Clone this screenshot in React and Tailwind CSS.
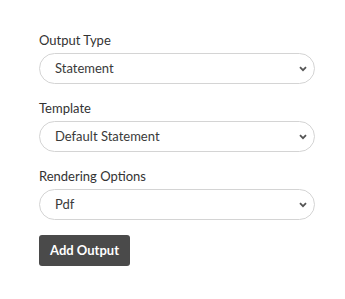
const Field = ({ label, value }) => (
  <div className="flex flex-col">
    <label className="text-[13px] leading-[18px] text-[#333333]">{label}</label>
    <div className="relative mt-[4px]">
      <select
        defaultValue={value}
        className="h-[31px] w-full appearance-none rounded-full border border-[#d4d4d4] bg-white pl-[15px] pr-8 text-[13px] text-[#3a3a3a] outline-none"
        style={{ fontFamily: "Lato, 'Liberation Sans', sans-serif" }}
      >
        <option>{value}</option>
      </select>
      <svg
        className="pointer-events-none absolute right-[8px] top-1/2 -translate-y-1/2"
        width="8"
        height="6"
        viewBox="0 0 8 6"
      >
        <path d="M1 1.2 L4 4.2 L7 1.2" fill="none" stroke="#555555" strokeWidth="1.8" />
      </svg>
    </div>
  </div>
);

const App = () => {
  const fields = [
    { label: "Output Type", value: "Statement" },
    { label: "Template", value: "Default Statement" },
    { label: "Rendering Options", value: "Pdf" },
  ];

  return (
    <div
      className="min-h-[299px] w-[345px] bg-white pl-[39px] pr-[30px] pt-[31px]"
      style={{ fontFamily: "Lato, 'Liberation Sans', sans-serif" }}
    >
      <div className="flex flex-col gap-[15px]">
        {fields.map((f) => (
          <Field key={f.label} label={f.label} value={f.value} />
        ))}
        <div>
          <button className="h-[31px] w-[91px] rounded-[3px] bg-[#4a4a4a] text-[13px] font-bold text-white">
            Add Output
          </button>
        </div>
      </div>
    </div>
  );
};

export default App;
